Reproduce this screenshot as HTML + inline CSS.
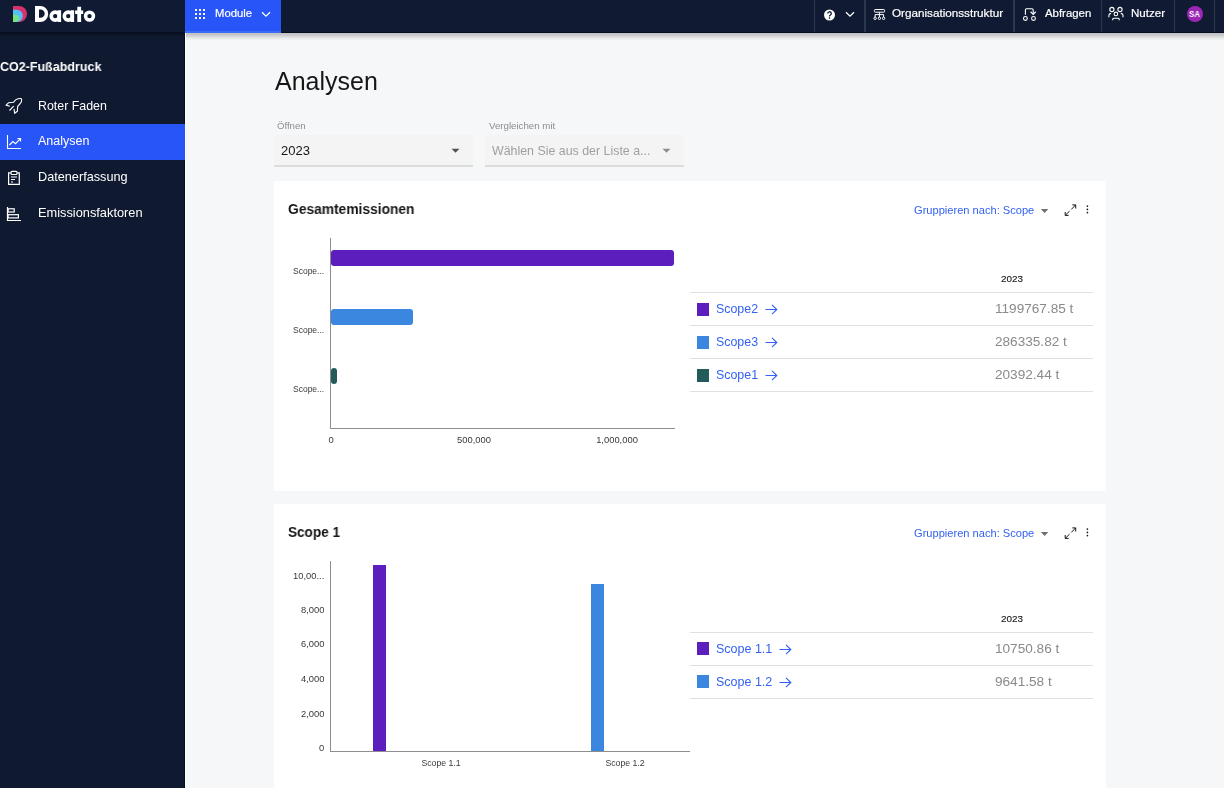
<!DOCTYPE html>
<html><head><meta charset="utf-8"><title>Analysen</title>
<style>
html,body{margin:0;padding:0;width:1224px;height:788px;overflow:hidden;background:#f6f7f9;}
body{position:relative;font-family:"Liberation Sans", sans-serif;}
.t{position:absolute;white-space:nowrap;will-change:transform;}
.r{position:absolute;}
</style></head><body>
<div class="r" style="left:0px;top:0px;width:1224px;height:788px;background:#f6f7f9;"></div>
<div class="r" style="left:0px;top:0px;width:185px;height:788px;background:#0f1a30;"></div>
<div class="r" style="left:184px;top:33px;width:1px;height:755px;background:#060d1c;"></div>
<div class="r" style="left:185px;top:33px;width:1px;height:755px;background:#ffffff;"></div>
<div class="r" style="left:0px;top:0px;width:1224px;height:32px;background:#101b33;"></div>
<div class="r" style="left:0px;top:32px;width:1224px;height:1px;background:#050d20;"></div>
<div class="r" style="left:186px;top:33px;width:1038px;height:8px;background:linear-gradient(rgba(0,0,0,0.22) 0px,rgba(0,0,0,0.19) 2px,rgba(0,0,0,0.06) 5px,rgba(0,0,0,0) 8px);"></div>
<div class="r" style="left:0px;top:33px;width:184px;height:2px;background:#0a1222;"></div>
<svg class="r" style="left:12px;top:5px" width="17" height="18" viewBox="0 0 17 18">
<path d="M1 1 H7 A8 8 0 0 1 7 17 H1 Z" fill="#d6336c"/>
<path d="M1 4.8 H4.7 A6.1 6.1 0 0 1 4.7 17 H1 Z" fill="#55bff7"/>
<path d="M1 9.7 H3.45 A3.65 3.65 0 0 1 3.45 17 H1 Z" fill="#72e57f"/>
</svg>
<svg class="r" style="left:0px;top:0px" width="100" height="30" viewBox="0 0 100 30"><path fill="#fff" fill-rule="evenodd" d="M35 6 H40.2 A8 8 0 0 1 40.2 22 H35 Z M39 9.5 H40.55 A4.15 4.15 0 0 1 40.55 17.8 H39 Z M49.40 16.1 a5.8 5.8 0 1 0 11.60 0 a5.8 5.8 0 1 0 -11.60 0 Z M53.00 16.1 a2.2 2.2 0 1 0 4.40 0 a2.2 2.2 0 1 0 -4.40 0 Z M62.50 16.1 a5.8 5.8 0 1 0 11.60 0 a5.8 5.8 0 1 0 -11.60 0 Z M66.10 16.1 a2.2 2.2 0 1 0 4.40 0 a2.2 2.2 0 1 0 -4.40 0 Z M83.80 16.1 a5.7 5.7 0 1 0 11.40 0 a5.7 5.7 0 1 0 -11.40 0 Z M87.30 16.1 a2.2 2.2 0 1 0 4.40 0 a2.2 2.2 0 1 0 -4.40 0 Z"/><path fill="#fff" d="M57.6 10.3 H61.1 V21.95 H57.6 Z M70.6 10.3 H74.1 V21.95 H70.6 Z M77.3 6.8 H81.1 V21.95 H77.3 Z M75.1 10.5 H83.2 V14 H75.1 Z"/></svg>
<div class="r" style="left:185px;top:0px;width:96px;height:31px;background:#2855f7;"></div>
<div class="r" style="left:185px;top:31px;width:96px;height:2px;background:#3b6cf8;"></div>
<svg class="r" style="left:194px;top:8px" width="12" height="12" viewBox="0 0 12 12"><rect x="1" y="1" width="2" height="2" rx="0.3" fill="#fff"/><rect x="1" y="5" width="2" height="2" rx="0.3" fill="#fff"/><rect x="1" y="9" width="2" height="2" rx="0.3" fill="#fff"/><rect x="5" y="1" width="2" height="2" rx="0.3" fill="#fff"/><rect x="5" y="5" width="2" height="2" rx="0.3" fill="#fff"/><rect x="5" y="9" width="2" height="2" rx="0.3" fill="#fff"/><rect x="9" y="1" width="2" height="2" rx="0.3" fill="#fff"/><rect x="9" y="5" width="2" height="2" rx="0.3" fill="#fff"/><rect x="9" y="9" width="2" height="2" rx="0.3" fill="#fff"/></svg>
<div class="t" style="left:214.60px;top:7.63px;font-size:11.3px;line-height:11.3px;color:#ffffff;font-weight:400;-webkit-text-stroke:0.2px #fff;">Module</div>
<svg class="r" style="left:261px;top:11px" width="10" height="7" viewBox="0 0 10 7"><path d="M1 1.2 L5 5.2 L9 1.2" stroke="#fff" stroke-width="1.3" fill="none"/></svg>
<div class="r" style="left:814px;top:0px;width:1px;height:32px;background:#2e384c;"></div>
<div class="r" style="left:864px;top:0px;width:2px;height:32px;background:#2e384c;"></div>
<div class="r" style="left:1013px;top:0px;width:2px;height:32px;background:#2e384c;"></div>
<div class="r" style="left:1101px;top:0px;width:1px;height:32px;background:#2e384c;"></div>
<div class="r" style="left:1174px;top:0px;width:1px;height:32px;background:#2e384c;"></div>
<div class="r" style="left:1214px;top:0px;width:1px;height:32px;background:#2e384c;"></div>
<svg class="r" style="left:823px;top:9px" width="13" height="13" viewBox="0 0 13 13"><circle cx="6.5" cy="6" r="5.5" fill="#fff"/><path d="M4.7 4.6 A1.8 1.8 0 1 1 7 6.3 Q6.5 6.6 6.5 7.4" stroke="#101b33" stroke-width="1.3" fill="none"/><circle cx="6.5" cy="9.1" r="0.8" fill="#101b33"/></svg>
<svg class="r" style="left:845px;top:11px" width="10" height="7" viewBox="0 0 10 7"><path d="M1 1.2 L5 5.2 L9 1.2" stroke="#fff" stroke-width="1.3" fill="none"/></svg>
<svg class="r" style="left:870px;top:5px" width="18" height="18" viewBox="0 0 18 18" fill="none" stroke="#fff" stroke-width="1">
<rect x="4.4" y="4.5" width="10.2" height="2.7" rx="0.9"/><path d="M9.4 7.2 V12.1 M5.1 12.1 V9.6 H13.6 V12.1"/>
<circle cx="5.1" cy="13.3" r="1.2"/><circle cx="9.4" cy="13.3" r="1.2"/><circle cx="13.6" cy="13.3" r="1.2"/></svg>
<div class="t" style="left:892.30px;top:7.39px;font-size:11.7px;line-height:11.7px;color:#ffffff;font-weight:400;-webkit-text-stroke:0.2px #fff;">Organisationsstruktur</div>
<svg class="r" style="left:1016px;top:2px" width="24" height="22" viewBox="0 0 24 22" fill="none" stroke="#fff" stroke-width="1.1">
<path d="M9.4 12.8 V7.9 Q9.4 6.7 10.6 6.7 H16 Q17.2 6.7 17.2 7.9 V12.3"/><path d="M14.6 9.75 L17.2 12.4 L19.8 9.75"/>
<circle cx="9.4" cy="16.45" r="1.9"/><circle cx="17.5" cy="16.45" r="1.9"/></svg>
<div class="t" style="left:1044.60px;top:7.65px;font-size:11.4px;line-height:11.4px;color:#ffffff;font-weight:400;-webkit-text-stroke:0.2px #fff;">Abfragen</div>
<svg class="r" style="left:1102px;top:2px" width="26" height="22" viewBox="0 0 26 22" fill="none" stroke="#fff" stroke-width="1.1">
<circle cx="9.9" cy="7.5" r="2.1"/><circle cx="18" cy="7.5" r="2.1"/><circle cx="13.9" cy="11.9" r="1.8"/>
<path d="M9.1 11.4 Q6.9 11.6 6.9 13.2 V15.2 M18.8 11.4 Q21 11.6 21 13.2 V15.2 M10.7 18.3 V17.2 Q10.7 16.2 11.7 16.2 H16.2 Q17.2 16.2 17.2 17.2 V18.3"/></svg>
<div class="t" style="left:1130.60px;top:7.48px;font-size:11.6px;line-height:11.6px;color:#ffffff;font-weight:400;-webkit-text-stroke:0.2px #fff;">Nutzer</div>
<div class="r" style="left:1186.9px;top:5.7px;width:16.2px;height:16.3px;background:#9c27b5;border-radius:50%;"></div>
<div class="t" style="left:1189.00px;top:9.70px;font-size:8.5px;line-height:8.5px;color:#ffffff;font-weight:700;transform:scaleX(0.9315);transform-origin:0 0;">SA</div>
<div class="t" style="left:0.00px;top:60.12px;font-size:13.2px;line-height:13.2px;color:#ffffff;font-weight:700;transform:scaleX(0.9479);transform-origin:0 0;">CO2-Fußabdruck</div>
<div class="r" style="left:0px;top:124px;width:185px;height:36px;background:#2855f7;"></div>
<div class="t" style="left:38.00px;top:99.50px;font-size:12.4px;line-height:12.4px;color:#ffffff;font-weight:400;">Roter Faden</div>
<div class="t" style="left:38.00px;top:135.42px;font-size:12.5px;line-height:12.5px;color:#ffffff;font-weight:400;">Analysen</div>
<div class="t" style="left:38.00px;top:170.75px;font-size:12.7px;line-height:12.7px;color:#ffffff;font-weight:400;">Datenerfassung</div>
<div class="t" style="left:38.00px;top:206.66px;font-size:12.8px;line-height:12.8px;color:#ffffff;font-weight:400;">Emissionsfaktoren</div>
<svg class="r" style="left:0px;top:92px" width="28" height="28" viewBox="0 0 28 28" fill="none" stroke="#fff" stroke-width="1.15" stroke-linejoin="round">
<path d="M9.8 14.2 L6.1 13.1 L8.7 10.7 L13.4 10.3 Q15.5 7.4 18 6.8 Q21.6 5.9 21.6 7.5 Q21.8 9.2 20.9 10.6 L17.6 14.6 L17.4 19.2 L14.6 21.3 L14.1 17"/><path d="M9.5 18.5 L13.7 14.2"/></svg>
<svg class="r" style="left:0px;top:130px" width="28" height="26" viewBox="0 0 28 26" fill="none" stroke="#fff" stroke-width="1.1">
<path d="M7.5 5 V18.5 H21"/><path d="M9.4 15 L12.9 11.5 L15.5 13.7 L20.5 8.7"/><path d="M17.5 8.6 H20.6 V11.6"/></svg>
<svg class="r" style="left:0px;top:166px" width="28" height="26" viewBox="0 0 28 26" fill="none" stroke="#fff" stroke-width="1.2">
<path d="M10.8 6.8 H8.6 V18.4 H19.3 V6.8 H17.2"/><rect x="11" y="5.3" width="6" height="3.2" rx="1"/><path d="M11 11 H17 M11 13.5 H15 M11 16 H13"/></svg>
<svg class="r" style="left:0px;top:202px" width="28" height="26" viewBox="0 0 28 26" fill="none" stroke="#fff" stroke-width="1.2">
<path d="M7.5 5 V18.5 H21"/><rect x="8.1" y="6.8" width="6.1" height="3.2"/><rect x="8.1" y="12.7" width="10.3" height="3.2"/></svg>
<div class="t" style="left:275.00px;top:68.83px;font-size:25px;line-height:25px;color:#161616;font-weight:400;">Analysen</div>
<div class="t" style="left:277.40px;top:120.87px;font-size:9.6px;line-height:9.6px;color:#8d8d8d;font-weight:400;">Öffnen</div>
<div class="r" style="left:274px;top:135px;width:199px;height:30px;background:#f4f4f4;"></div>
<div class="r" style="left:274px;top:165px;width:199px;height:2px;background:#dcdcdc;"></div>
<div class="t" style="left:281.40px;top:143.99px;font-size:13px;line-height:13px;color:#161616;font-weight:400;">2023</div>
<svg class="r" style="left:451px;top:148px" width="9" height="6" viewBox="0 0 9 6"><path d="M0.5 0.8 H8.5 L4.5 4.8 Z" fill="#525252"/></svg>
<div class="t" style="left:488.80px;top:120.79px;font-size:9.7px;line-height:9.7px;color:#8d8d8d;font-weight:400;">Vergleichen mit</div>
<div class="r" style="left:485px;top:135px;width:199px;height:30px;background:#f4f4f4;"></div>
<div class="r" style="left:485px;top:165px;width:199px;height:2px;background:#dcdcdc;"></div>
<div class="t" style="left:492.00px;top:144.50px;font-size:12.4px;line-height:12.4px;color:#a0a0a0;font-weight:400;">Wählen Sie aus der Liste a...</div>
<svg class="r" style="left:662px;top:148px" width="9" height="6" viewBox="0 0 9 6"><path d="M0.5 0.8 H8.5 L4.5 4.8 Z" fill="#8d8d8d"/></svg>
<div class="r" style="left:274px;top:181px;width:832px;height:310px;background:#ffffff;"></div>
<div class="t" style="left:287.60px;top:202.25px;font-size:14px;line-height:14px;color:#161616;font-weight:700;transform:scaleX(0.9853);transform-origin:0 0;">Gesamtemissionen</div>
<div class="t" style="left:914.00px;top:204.50px;font-size:11.1px;line-height:11.1px;color:#3462f2;font-weight:400;">Gruppieren nach: Scope</div>
<svg class="r" style="left:1040px;top:208px" width="10" height="6" viewBox="0 0 10 6"><path d="M0.9 1.1 H8.3 L4.6 5 Z" fill="#6f6f6f"/></svg>
<svg class="r" style="left:1064px;top:204px" width="13" height="13" viewBox="0 0 13 13" fill="none" stroke="#161616" stroke-width="1">
<path d="M8.3 0.9 H11.7 V4.5 M11.7 0.9 L7.3 5.4 M4.6 11.4 H1.2 V8.0 M1.2 11.4 L5.6 7.1"/></svg>
<svg class="r" style="left:1086px;top:204px" width="3" height="11" viewBox="0 0 3 11"><circle cx="1.4" cy="2.1" r="0.85" fill="#161616"/><circle cx="1.4" cy="5.4" r="0.85" fill="#161616"/><circle cx="1.4" cy="8.6" r="0.85" fill="#161616"/></svg>
<div class="r" style="left:330px;top:238px;width:1px;height:191px;background:#8d8d8d;"></div>
<div class="r" style="left:330px;top:428px;width:345px;height:1px;background:#8d8d8d;"></div>
<div class="r" style="left:331px;top:250px;width:343px;height:16px;background:#5c1fbd;border-radius:3px;"></div>
<div class="r" style="left:331px;top:309px;width:82px;height:16px;background:#3b87e0;border-radius:3px;"></div>
<div class="r" style="left:331px;top:368px;width:6px;height:16px;background:#235a5a;border-radius:3px;"></div>
<div class="t" style="right:899.80px;top:267.00px;font-size:8.5px;line-height:8.5px;color:#393939;font-weight:400;">Scope...</div>
<div class="t" style="right:899.80px;top:326.00px;font-size:8.5px;line-height:8.5px;color:#393939;font-weight:400;">Scope...</div>
<div class="t" style="right:899.80px;top:385.00px;font-size:8.5px;line-height:8.5px;color:#393939;font-weight:400;">Scope...</div>
<div class="t" style="left:31.00px;width:600px;text-align:center;top:435.34px;font-size:9.4px;line-height:9.4px;color:#393939;font-weight:400;">0</div>
<div class="t" style="left:174.00px;width:600px;text-align:center;top:435.34px;font-size:9.4px;line-height:9.4px;color:#393939;font-weight:400;">500,000</div>
<div class="t" style="left:317.30px;width:600px;text-align:center;top:435.34px;font-size:9.4px;line-height:9.4px;color:#393939;font-weight:400;">1,000,000</div>
<div class="t" style="left:1001.00px;top:273.92px;font-size:9.9px;line-height:9.9px;color:#161616;font-weight:400;-webkit-text-stroke:0.12px #161616;">2023</div>
<div class="r" style="left:690px;top:292px;width:403px;height:1px;background:#e0e0e0;"></div>
<div class="r" style="left:697px;top:303px;width:12px;height:13px;background:#5c1fbd;"></div>
<div class="t" style="left:716.00px;top:303.30px;font-size:12.4px;line-height:12.4px;color:#3462f2;font-weight:400;">Scope2</div>
<svg class="r" style="left:765.06px;top:304px" width="13" height="11" viewBox="0 0 13 11" fill="none" stroke="#3462f2" stroke-width="1.15"><path d="M0.5 5.5 H11.8 M7 0.8 L11.8 5.5 L7 10.2"/></svg>
<div class="r" style="left:690px;top:325px;width:403px;height:1px;background:#e0e0e0;"></div>
<div class="t" style="left:994.50px;top:302.18px;font-size:13.6px;line-height:13.6px;color:#8a8a8a;font-weight:400;">1199767.85 t</div>
<div class="r" style="left:697px;top:336px;width:12px;height:13px;background:#3b87e0;"></div>
<div class="t" style="left:716.00px;top:336.30px;font-size:12.4px;line-height:12.4px;color:#3462f2;font-weight:400;">Scope3</div>
<svg class="r" style="left:765.06px;top:337px" width="13" height="11" viewBox="0 0 13 11" fill="none" stroke="#3462f2" stroke-width="1.15"><path d="M0.5 5.5 H11.8 M7 0.8 L11.8 5.5 L7 10.2"/></svg>
<div class="r" style="left:690px;top:358px;width:403px;height:1px;background:#e0e0e0;"></div>
<div class="t" style="left:994.50px;top:335.18px;font-size:13.6px;line-height:13.6px;color:#8a8a8a;font-weight:400;">286335.82 t</div>
<div class="r" style="left:697px;top:369px;width:12px;height:13px;background:#235a5a;"></div>
<div class="t" style="left:716.00px;top:369.30px;font-size:12.4px;line-height:12.4px;color:#3462f2;font-weight:400;">Scope1</div>
<svg class="r" style="left:765.06px;top:370px" width="13" height="11" viewBox="0 0 13 11" fill="none" stroke="#3462f2" stroke-width="1.15"><path d="M0.5 5.5 H11.8 M7 0.8 L11.8 5.5 L7 10.2"/></svg>
<div class="r" style="left:690px;top:391px;width:403px;height:1px;background:#e0e0e0;"></div>
<div class="t" style="left:994.50px;top:368.18px;font-size:13.6px;line-height:13.6px;color:#8a8a8a;font-weight:400;">20392.44 t</div>
<div class="r" style="left:274px;top:504px;width:832px;height:284px;background:#ffffff;"></div>
<div class="t" style="left:287.60px;top:525.25px;font-size:14px;line-height:14px;color:#161616;font-weight:700;transform:scaleX(0.9685);transform-origin:0 0;">Scope 1</div>
<div class="t" style="left:914.00px;top:527.50px;font-size:11.1px;line-height:11.1px;color:#3462f2;font-weight:400;">Gruppieren nach: Scope</div>
<svg class="r" style="left:1040px;top:531px" width="10" height="6" viewBox="0 0 10 6"><path d="M0.9 1.1 H8.3 L4.6 5 Z" fill="#6f6f6f"/></svg>
<svg class="r" style="left:1064px;top:527px" width="13" height="13" viewBox="0 0 13 13" fill="none" stroke="#161616" stroke-width="1">
<path d="M8.3 0.9 H11.7 V4.5 M11.7 0.9 L7.3 5.4 M4.6 11.4 H1.2 V8.0 M1.2 11.4 L5.6 7.1"/></svg>
<svg class="r" style="left:1086px;top:527px" width="3" height="11" viewBox="0 0 3 11"><circle cx="1.4" cy="2.1" r="0.85" fill="#161616"/><circle cx="1.4" cy="5.4" r="0.85" fill="#161616"/><circle cx="1.4" cy="8.6" r="0.85" fill="#161616"/></svg>
<div class="r" style="left:330px;top:561px;width:1px;height:191px;background:#8d8d8d;"></div>
<div class="r" style="left:330px;top:751px;width:360px;height:1px;background:#8d8d8d;"></div>
<div class="r" style="left:373px;top:565px;width:13px;height:186px;background:#5c1fbd;"></div>
<div class="r" style="left:591px;top:584px;width:13px;height:167px;background:#3b87e0;"></div>
<div class="t" style="right:899.60px;top:571.44px;font-size:9.4px;line-height:9.4px;color:#393939;font-weight:400;">10,00...</div>
<div class="t" style="right:899.60px;top:605.44px;font-size:9.4px;line-height:9.4px;color:#393939;font-weight:400;">8,000</div>
<div class="t" style="right:899.60px;top:639.44px;font-size:9.4px;line-height:9.4px;color:#393939;font-weight:400;">6,000</div>
<div class="t" style="right:899.60px;top:674.44px;font-size:9.4px;line-height:9.4px;color:#393939;font-weight:400;">4,000</div>
<div class="t" style="right:899.60px;top:709.44px;font-size:9.4px;line-height:9.4px;color:#393939;font-weight:400;">2,000</div>
<div class="t" style="right:899.60px;top:743.44px;font-size:9.4px;line-height:9.4px;color:#393939;font-weight:400;">0</div>
<div class="t" style="left:141.30px;width:600px;text-align:center;top:758.83px;font-size:8.7px;line-height:8.7px;color:#393939;font-weight:400;">Scope 1.1</div>
<div class="t" style="left:324.60px;width:600px;text-align:center;top:758.83px;font-size:8.7px;line-height:8.7px;color:#393939;font-weight:400;">Scope 1.2</div>
<div class="t" style="left:1001.00px;top:613.82px;font-size:9.9px;line-height:9.9px;color:#161616;font-weight:400;-webkit-text-stroke:0.12px #161616;">2023</div>
<div class="r" style="left:690px;top:632px;width:403px;height:1px;background:#e0e0e0;"></div>
<div class="r" style="left:697px;top:642px;width:12px;height:13px;background:#5c1fbd;"></div>
<div class="t" style="left:716.00px;top:643.22px;font-size:12.5px;line-height:12.5px;color:#3462f2;font-weight:400;">Scope 1.1</div>
<svg class="r" style="left:779.29px;top:644px" width="13" height="11" viewBox="0 0 13 11" fill="none" stroke="#3462f2" stroke-width="1.15"><path d="M0.5 5.5 H11.8 M7 0.8 L11.8 5.5 L7 10.2"/></svg>
<div class="r" style="left:690px;top:665px;width:403px;height:1px;background:#e0e0e0;"></div>
<div class="t" style="left:994.50px;top:642.18px;font-size:13.6px;line-height:13.6px;color:#8a8a8a;font-weight:400;">10750.86 t</div>
<div class="r" style="left:697px;top:675px;width:12px;height:13px;background:#3b87e0;"></div>
<div class="t" style="left:716.00px;top:676.22px;font-size:12.5px;line-height:12.5px;color:#3462f2;font-weight:400;">Scope 1.2</div>
<svg class="r" style="left:779.29px;top:677px" width="13" height="11" viewBox="0 0 13 11" fill="none" stroke="#3462f2" stroke-width="1.15"><path d="M0.5 5.5 H11.8 M7 0.8 L11.8 5.5 L7 10.2"/></svg>
<div class="r" style="left:690px;top:698px;width:403px;height:1px;background:#e0e0e0;"></div>
<div class="t" style="left:994.50px;top:675.18px;font-size:13.6px;line-height:13.6px;color:#8a8a8a;font-weight:400;">9641.58 t</div>
</body></html>
